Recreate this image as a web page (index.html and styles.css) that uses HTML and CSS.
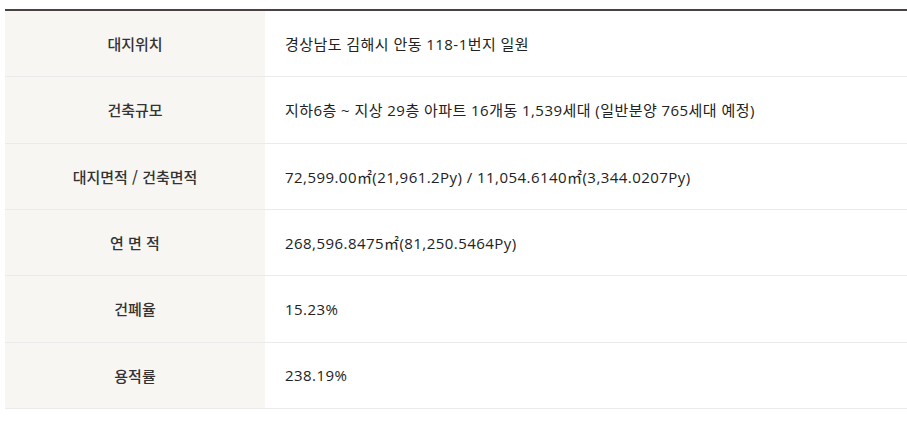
FILE: index.html
```html
<!DOCTYPE html>
<html lang="ko">
<head>
<meta charset="utf-8">
<title>사업개요</title>
<link rel="stylesheet" href="styles.css">
</head>
<body>
<div class="wrap">
  <div class="info">
    <div class="row"><div class="th">대지위치</div><div class="td">경상남도 김해시 안동 118-1번지 일원</div></div>
    <div class="row"><div class="th">건축규모</div><div class="td">지하6층 ~ 지상 29층 아파트 16개동 1,539세대 (일반분양 765세대 예정)</div></div>
    <div class="row"><div class="th">대지면적 / 건축면적</div><div class="td">72,599.00㎡(21,961.2Py) / 11,054.6140㎡(3,344.0207Py)</div></div>
    <div class="row"><div class="th">연 면 적</div><div class="td">268,596.8475㎡(81,250.5464Py)</div></div>
    <div class="row"><div class="th">건폐율</div><div class="td">15.23%</div></div>
    <div class="row"><div class="th">용적률</div><div class="td">238.19%</div></div>
  </div>
</div>
</body>
</html>
```
FILE: styles.css
```css
html, body {
  margin: 0;
  padding: 0;
  background: #fff;
}
.wrap {
  padding: 9px 0 0 5px;
}
.info {
  border-top: 2px solid #4a4242;
  font-family: "Noto Sans CJK KR", "Noto Sans", sans-serif;
  font-size: 15px;
  color: #333;
}
.row {
  display: grid;
  grid-template-columns: 260px 1fr;
  height: 66.33px;
  box-sizing: border-box;
  border-bottom: 1px solid #ebebeb;
}
.th {
  background: #f8f6f3;
  display: flex;
  align-items: center;
  justify-content: center;
  font-weight: 500;
  letter-spacing: 0;
  color: #333;
}
.td {
  display: flex;
  align-items: center;
  padding-left: 20px;
  color: #222;
  letter-spacing: 0.45px;
  font-family: "Open Sans", "Noto Sans CJK KR", sans-serif;
}
```
